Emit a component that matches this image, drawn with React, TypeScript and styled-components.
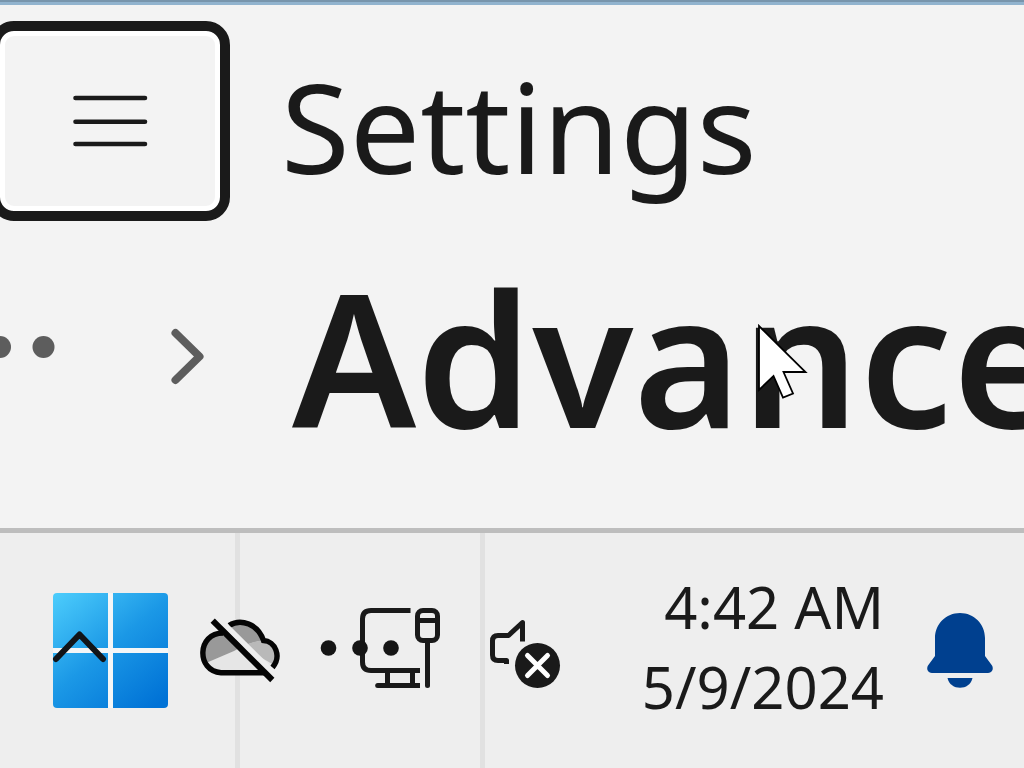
import React from "react";
import styled, { createGlobalStyle } from "styled-components";

const ink = "#1a1a1a";

const GlobalStyle = createGlobalStyle`
  *, *::before, *::after { box-sizing: border-box; }
  body {
    margin: 0;
    background: #eeeeee;
    color: ${ink};
    font-family: "Noto Sans", "Open Sans", sans-serif;
    overflow-x: hidden;
  }
`;

const Screen = styled.div`
  display: flex;
  flex-direction: column;
  min-height: 100vh;
  overflow: hidden;
`;

const Wallpaper = styled.div`
  height: 5px;
  background: linear-gradient(#7895ac 0 2px, #91b3ce 2px 5px);
`;

const SettingsWindow = styled.main`
  display: flex;
  flex-direction: column;
  padding: 16px 0 37px;
  background: #f3f3f3;
`;

const TitleBar = styled.header`
  display: flex;
  gap: 51px;
`;

const PlainButton = styled.button`
  display: block;
  flex: none;
  padding: 0;
  border: 0;
  background: none;
  color: inherit;
  font: inherit;
  cursor: default;

  svg { display: block; }
`;

const MenuButton = styled(PlainButton)`
  display: flex;
  align-items: center;
  justify-content: center;
  width: 240px;
  height: 200px;
  margin-left: -10px;
  border: 10px solid ${ink};
  border-radius: 24px;
  box-shadow: inset 0 0 0 5px #ffffff;
`;

const AppName = styled.div`
  padding-top: 10px;
  font-size: 125px;
  line-height: 190px;
  white-space: nowrap;
`;

const Breadcrumb = styled.nav`
  display: flex;
  align-items: center;
  height: 270px;
  color: #5d5d5d;
`;

const MoreButton = styled(PlainButton)`
  padding-bottom: 18px;
`;

const Separator = styled.svg`
  flex: none;
  margin: 0 84px 0 112px;
`;

const PageTitle = styled.h1`
  position: relative;
  margin: 0;
  color: ${ink};
  font-size: 185px;
  font-weight: 600;
  line-height: 268px;
  white-space: nowrap;
`;

const Pointer = styled.svg`
  position: absolute;
  top: 100px;
  left: 464px;
`;

const Taskbar = styled.footer`
  display: flex;
  flex: 1;
  align-items: center;
  gap: 30px;
  min-height: 240px;
  padding: 0 30px 0 53px;
  border-top: 5px solid #bdbdbd;
  background: linear-gradient(
    90deg,
    #eeeeee 235px,
    #e1e1e1 235px 240px,
    #eeeeee 240px 480px,
    #e1e1e1 480px 485px,
    #eeeeee 485px
  );
`;

const Stack = styled.div`
  position: relative;
  flex: none;
`;

const OverlayButton = styled(PlainButton)<{ $top: number; $left: number }>`
  position: absolute;
  top: ${(p) => p.$top}px;
  left: ${(p) => p.$left}px;
`;

const Clock = styled(PlainButton)`
  margin-left: auto;
  padding-bottom: 8px;
  font-size: 58px;
  line-height: 80px;
  text-align: right;
  white-space: nowrap;

  time { display: block; }
`;

const BellButton = styled(PlainButton)`
  margin-left: 12px;
`;

const HamburgerIcon = () => (
  <svg width="78" height="58" viewBox="71 92 78 58" stroke={ink} strokeWidth="4.6" strokeLinecap="round">
    <path d="M75.500 98H145M75.500 121.700H145M75.500 144H145" />
  </svg>
);

const WindowsLogo = () => (
  <svg width="115" height="115" viewBox="0 0 115 115">
    <defs>
      <linearGradient id="win" gradientUnits="userSpaceOnUse" x1="5" y1="0" x2="100" y2="115">
        <stop offset="0" stopColor="#4bcbfb" />
        <stop offset="0.5" stopColor="#1b98e6" />
        <stop offset="1" stopColor="#0072d6" />
      </linearGradient>
    </defs>
    <rect width="115" height="115" rx="4" fill="#f4f6f7" />
    <g fill="url(#win)">
      <path d="M4 0H55V55H0V4a4 4 0 0 1 4-4Z" />
      <path d="M60 0H111a4 4 0 0 1 4 4V55H60Z" />
      <path d="M0 60H55V115H4a4 4 0 0 1-4-4Z" />
      <path d="M60 60H115V111a4 4 0 0 1-4 4H60Z" />
    </g>
  </svg>
);

const ChevronUpIcon = () => (
  <svg width="56" height="34" viewBox="52 630 56 34" fill="none" stroke="#111418" strokeWidth="6" strokeLinecap="round" strokeLinejoin="round">
    <path d="M56 659L79.500 634.500L103 659" />
  </svg>
);

const CloudOffIcon = () => (
  <svg width="84" height="73" viewBox="198 614 84 73" fill="none">
    <path d="M222 633C228 618 254 616 263.500 640.500C273 642 278 649 277.500 655C277 666 272 673 264 673H220C197 671 198 634 222 633Z" fill="#e6e6e6" />
    <path d="M222 633C228 618 254 616 263.500 640.500C256 641 244 645 234 651L206 663C198 648 206 634 222 633Z" fill="#999999" />
    <path d="M263.500 640.500C273 642 278 649 277.500 655C277 660 276 662 274 665L243 647C249 643 256 641 263.500 640.500Z" fill="#b9b9b9" />
    <g stroke="#050505" strokeWidth="5.400">
      <path d="M266 672.700H221C196 671 197 633 223 633" />
      <path d="M229 625.500C241 618 258 624 263.500 640.500C275 641 282 656 272.500 667.500" />
    </g>
    <path d="M217 617L277 676.500" stroke="#eeeeee" strokeWidth="5.500" />
    <path d="M212.700 620.700L272.300 680" stroke="#050505" strokeWidth="6" />
  </svg>
);

const NetworkIcon = () => (
  <svg width="136" height="89" viewBox="312 606 136 89" fill="none" stroke={ink} strokeWidth="5">
    <path d="M410.500 610.500H371Q362.500 610.500 362.500 619V662Q362.500 670.500 371 670.500H420" />
    <path d="M387.500 671V685M412.500 671V685" />
    <path d="M420 685.500H378" />
    <circle cx="377.700" cy="685.500" r="2.500" fill={ink} stroke="none" />
    <rect x="417.500" y="610.500" width="20" height="30" rx="5.500" />
    <path d="M417.500 620.500H437.500" />
    <path d="M427.500 641V685.500" strokeLinecap="round" />
  </svg>
);

const DotsIcon = () => (
  <svg width="80" height="16" viewBox="0 0 80 16" fill="#151515">
    <circle cx="8.500" cy="8" r="7.800" />
    <circle cx="40" cy="8" r="7.800" />
    <circle cx="71" cy="8" r="7.800" />
  </svg>
);

const MutedIcon = () => (
  <svg width="84" height="77" viewBox="478 612 84 77" fill="none" stroke={ink} strokeWidth="5">
    <path d="M522.500 641.500V622.500L508.500 635.500H498Q492.500 635.500 492.500 641V655Q492.500 660.500 498 660.500H506.500V664" strokeLinejoin="round" />
    <circle cx="537.500" cy="665.500" r="22.500" fill={ink} stroke="none" />
    <path d="M527.500 655.500L547.500 675.500M547.500 655.500L527.500 675.500" stroke="#ffffff" strokeLinecap="round" />
  </svg>
);

const BellIcon = () => (
  <svg width="68" height="76" viewBox="926 613 68 76" fill="#00408f">
    <path d="M960 613C974 613 985 624 985 638V656L992 665.500C994 669 992 673 988 673H932C928 673 926 669 928 665.500L935 656V638C935 624 946 613 960 613Z" />
    <path d="M947.500 678H972.500C970 691 950 691 947.500 678Z" />
  </svg>
);

export default function App() {
  return (
    <Screen>
      <GlobalStyle />
      <Wallpaper />
      <SettingsWindow>
        <TitleBar>
          <MenuButton type="button" aria-label="Open navigation">
            <HamburgerIcon />
          </MenuButton>
          <AppName>Settings</AppName>
        </TitleBar>
        <Breadcrumb aria-label="Breadcrumb">
          <MoreButton type="button" aria-label="More">
            <svg width="56" height="24" viewBox="0 0 56 24" fill="currentColor">
              <circle cx="0" cy="12" r="11" />
              <circle cx="43.500" cy="12" r="11" />
            </svg>
          </MoreButton>
          <Separator width="40" height="58" viewBox="168 327 40 58" fill="none" stroke="currentColor" strokeWidth="8" strokeLinecap="round" strokeLinejoin="round" aria-hidden="true">
            <path d="M175.500 333L199.500 356.500L175.500 380" />
          </Separator>
          <PageTitle>
            Advance
            <Pointer width="52" height="78" viewBox="756 322 52 78" fill="#ffffff" stroke="#000000" strokeWidth="1.800" aria-hidden="true">
              <path d="M759 326V390L773.500 376L783 397.500L793 393.500L783.500 372H805.500Z" />
            </Pointer>
          </PageTitle>
        </Breadcrumb>
      </SettingsWindow>
      <Taskbar>
        <Stack>
          <PlainButton type="button" aria-label="Start">
            <WindowsLogo />
          </PlainButton>
          <OverlayButton $top={37} $left={-1} type="button" aria-label="Show hidden icons">
            <ChevronUpIcon />
          </OverlayButton>
        </Stack>
        <PlainButton type="button" aria-label="OneDrive not signed in">
          <CloudOffIcon />
        </PlainButton>
        <Stack>
          <PlainButton type="button" aria-label="Network">
            <NetworkIcon />
          </PlainButton>
          <OverlayButton $top={34} $left={8} type="button" aria-label="More apps">
            <DotsIcon />
          </OverlayButton>
        </Stack>
        <PlainButton type="button" aria-label="Volume muted">
          <MutedIcon />
        </PlainButton>
        <Clock type="button">
          <time>4:42 AM</time>
          <time>5/9/2024</time>
        </Clock>
        <BellButton type="button" aria-label="Notifications">
          <BellIcon />
        </BellButton>
      </Taskbar>
    </Screen>
  );
}
